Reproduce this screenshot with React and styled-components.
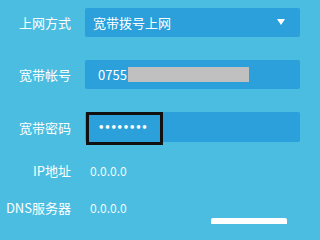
import React from "react";
import styled, { createGlobalStyle } from "styled-components";

const GlobalStyle = createGlobalStyle`
  html, body {
    margin: 0;
    padding: 0;
    background: #4bbde0;
    overflow: hidden;
  }
  body {
    font-family: "Noto Sans CJK SC", "Noto Sans", sans-serif;
    color: #ffffff;
  }
`;

const Page = styled.div`
  width: 312px;
  height: 224px;
  padding-top: 8px;
  box-sizing: border-box;
  display: flex;
  flex-direction: column;
  overflow: hidden;
`;

const Row = styled.div`
  flex-shrink: 0;
  display: grid;
  grid-template-columns: 71px 215px;
  column-gap: 14px;
  align-items: center;
  height: ${props => props.height || "30px"};
  margin-bottom: ${props => props.bottom || "0"};
`;

const Label = styled.div`
  text-align: right;
  font-size: 13px;
  line-height: 1;
  white-space: nowrap;
  color: #ffffff;
`;

const Field = styled.div`
  position: relative;
  height: 100%;
  background: #2ba0da;
  border-radius: 2px;
  display: flex;
  align-items: center;
  padding-left: ${props => props.pad || "13px"};
  font-size: 13px;
`;

const Arrow = styled.span`
  position: absolute;
  right: 15px;
  top: 11px;
  width: 0;
  height: 0;
  border-left: 4px solid transparent;
  border-right: 4px solid transparent;
  border-top: 6px solid #ffffff;
`;

const Masked = styled.span`
  display: inline-block;
  width: 121px;
  height: 15px;
  margin-left: 1px;
  background: #c0c0c0;
`;

const Dots = styled.span`
  font-size: 10px;
  font-weight: bold;
  letter-spacing: -0.2px;
  font-family: "DejaVu Sans", sans-serif;
`;

const FocusRing = styled.span`
  position: absolute;
  left: 1px;
  top: 0;
  width: 77px;
  height: 33px;
  box-sizing: border-box;
  border: 3px solid #111111;
`;

const Value = styled.div`
  padding-left: 5px;
  font-size: 12px;
  color: #f4fbfe;
`;

const ButtonRow = styled.div`
  flex-shrink: 0;
  display: flex;
  padding-left: 211px;
`;

const Button = styled.div`
  width: 76px;
  height: 30px;
  background: #ffffff;
  border-radius: 2px;
`;

export default () => {
  return (
    <React.Fragment>
      <GlobalStyle />
      <Page>
        <Row height="29px" bottom="23px">
          <Label>上网方式</Label>
          <Field pad="8px">
            宽带拨号上网
            <Arrow />
          </Field>
        </Row>
        <Row height="29px" bottom="23px">
          <Label>宽带帐号</Label>
          <Field>
            0755
            <Masked />
          </Field>
        </Row>
        <Row height="30px" bottom="17px">
          <Label>宽带密码</Label>
          <Field>
            <Dots>••••••••</Dots>
            <FocusRing />
          </Field>
        </Row>
        <Row height="22px" bottom="15px">
          <Label>IP地址</Label>
          <Value>0.0.0.0</Value>
        </Row>
        <Row height="22px">
          <Label>DNS服务器</Label>
          <Value>0.0.0.0</Value>
        </Row>
        <ButtonRow>
          <Button />
        </ButtonRow>
      </Page>
    </React.Fragment>
  );
};
